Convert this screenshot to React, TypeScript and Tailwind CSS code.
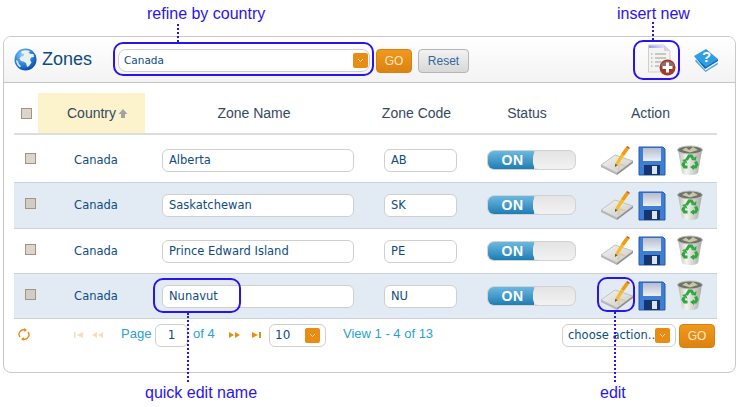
const zones = [
  { name: "Alberta", code: "AB", alt: false, h: "h-[48px] pt-[4px]" },
  { name: "Saskatchewan", code: "SK", alt: true, h: "h-[46px]" },
  { name: "Prince Edward Island", code: "PE", alt: false, h: "h-[45px]" },
  { name: "Nunavut", code: "NU", alt: true, h: "h-[45px]" },
]

function Globe() {
  return (
    <svg width="23" height="23" viewBox="0 0 23 23">
      <defs>
        <radialGradient id="gl" cx="38%" cy="30%" r="75%">
          <stop offset="0" stopColor="#8fd0f7" />
          <stop offset="0.55" stopColor="#2b86dc" />
          <stop offset="1" stopColor="#0b45a5" />
        </radialGradient>
      </defs>
      <circle cx="11.5" cy="11.5" r="11" fill="url(#gl)" />
      <path d="M7 3.5 C10 2 14 2 16 3 L14.5 5 L17 6 L19.5 6 L20 9 L17 9.5 L16 12 L17.5 14.5 L15 18 L13 19 L12 15 L9.5 13.5 L7 13 L5.5 10.5 L7 8.5 L9.5 8 L10 6 L7.5 5.5 Z" fill="#e9f1ea" />
      <path d="M2 12 L4 13 L5 16 L7 18 L6 19.5 C3.5 17.5 2.2 15 2 12 Z" fill="#d3e3e4" />
    </svg>
  )
}

function NewDocIcon() {
  return (
    <svg width="29" height="32" viewBox="0 0 29 32">
      <defs>
        <linearGradient id="dh" x1="0" x2="1" y1="0" y2="0">
          <stop offset="0" stopColor="#9a9af0" />
          <stop offset="1" stopColor="#e8e8fb" />
        </linearGradient>
      </defs>
      <path d="M1.5 1 H17 L23 7 V28 H1.5 Z" fill="#f3f3f1" stroke="#cfcfcf" />
      <path d="M2 1.5 H17 L19 4 H2 Z" fill="url(#dh)" />
      <path d="M17 1 V7 H23 Z" fill="#d5d5d5" />
      <path d="M4 10 H5.5 M8 10 H19 M4 14 H5.5 M8 14 H19 M4 18 H5.5 M8 18 H14 M4 22 H5.5 M8 22 H12" stroke="#9b9b9b" strokeWidth="1.2" />
      <circle cx="20.5" cy="23.5" r="8" fill="#a2392f" />
      <path d="M13.5 22 A7.5 7.5 0 0 1 27.5 22 Z" fill="#8c6f68" />
      <path d="M20.5 18.5 V28.5 M15.5 23.5 H25.5" stroke="#fff" strokeWidth="3" />
    </svg>
  )
}

function HelpBook() {
  return (
    <svg width="26" height="24" viewBox="0 0 26 24">
      <path d="M1 8 L13 1 L25 11 L13 20 Z" fill="#2f9ee4" />
      <path d="M1 8 L12 21 L25 13 V11 L13 19 Z" fill="#0c68b4" />
      <path d="M3 11.5 L12.5 22.5 L25 14.5 L24.5 16.5 L12.5 24 L2 13 Z" fill="#4aa6dc" />
      <text x="9" y="14" fontSize="15" fontWeight="700" fill="#fff" fontFamily="Liberation Sans, sans-serif">?</text>
    </svg>
  )
}

function EditIcon() {
  return (
    <svg width="34" height="30" viewBox="0 0 34 30">
      <defs>
        <linearGradient id="pg" x1="0" x2="1" y1="0" y2="1">
          <stop offset="0" stopColor="#f4f4f3" />
          <stop offset="1" stopColor="#c9c9c7" />
        </linearGradient>
      </defs>
      <path d="M1 19 L15 9 L33 15 L17 27 Z" fill="url(#pg)" stroke="#c2c2c2" />
      <path d="M1 19 L17 27 V29 L1 21 Z" fill="#b5b5b5" />
      <path d="M17 27 L33 15 V17 L17 29 Z" fill="#8f8f8f" />
      <path d="M15 18 L21 8 L24 10 L18 19 Z" fill="#f4bb2a" />
      <path d="M21 8 L26 1 L29 3 L24 10 Z" fill="#ee9c10" />
      <path d="M26 1 L27.5 0 L30 2 L29 3 Z" fill="#c0562c" />
      <path d="M15 18 L18 19 L15 21 Z" fill="#6a5a3a" />
      <path d="M18 24 L20 18 L25 20" fill="none" stroke="#e3c797" strokeWidth="1.4" />
    </svg>
  )
}

function SaveIcon() {
  return (
    <svg width="28" height="30" viewBox="0 0 28 30">
      <defs>
        <linearGradient id="fl" x1="0" x2="0" y1="0" y2="1">
          <stop offset="0" stopColor="#b4bccf" />
          <stop offset="1" stopColor="#eef0f4" />
        </linearGradient>
      </defs>
      <path d="M1 1 H25 L27 3 V29 H1 Z" fill="#3c7fd4" stroke="#2a5ba8" />
      <rect x="5" y="2" width="18" height="13" fill="url(#fl)" />
      <rect x="6" y="19" width="16" height="10" fill="#16356f" />
      <rect x="14" y="20" width="5" height="8" fill="#dbe5f2" />
    </svg>
  )
}

function TrashIcon() {
  return (
    <svg width="28" height="32" viewBox="0 0 28 32">
      <defs>
        <linearGradient id="tb" x1="0" x2="1" y1="0" y2="0">
          <stop offset="0" stopColor="#b7b9b2" />
          <stop offset="0.35" stopColor="#f4f5f1" />
          <stop offset="1" stopColor="#a6a8a2" />
        </linearGradient>
      </defs>
      <path d="M2 5 L6 28 C9 31 19 31 22 28 L26 5 Z" fill="url(#tb)" />
      <ellipse cx="14" cy="5" rx="12.5" ry="4" fill="#6f716c" stroke="#c3c4be" />
      <path d="M6 5 L10 2.5 L13 5 L17 2 L22 5 L14 7.5 Z" fill="#c9c6a2" />
      <g fill="none" stroke="#2fa83f" strokeWidth="3">
        <path d="M10.5 15 L13 11 H15.5 L17 13.5" />
        <path d="M19.5 16.5 L21 19.5 L19.5 22 H16.5" />
        <path d="M11.5 22 H8.5 L7 19.5 L8.5 17" />
      </g>
      <path d="M15 15 L20 15.5 L20.5 11 Z M18 19.5 L14 22 L18 25 Z M6 15 L10 14 L11.5 19 Z" fill="#2fa83f" />
    </svg>
  )
}

function Chevron() {
  return (
    <span className="w-[15px] h-[15px] bg-[#e88c14] rounded-[2px] flex items-center justify-center">
      <svg width="7" height="5" viewBox="0 0 7 5"><path d="M1 1 L3.5 3.5 L6 1" fill="none" stroke="#fbe3bd" strokeWidth="1" /></svg>
    </span>
  )
}

function Toggle() {
  return (
    <div className="w-[89px] h-[20px] -mt-[1px] rounded-[7px] flex overflow-hidden bg-[#dcdcdc] border border-[#d2d2d2]">
      <div className="w-[46px] bg-gradient-to-b from-[#6ab9df] to-[#1b7db4] text-white font-bold text-[14px] leading-[18px] tracking-[0.5px] text-center pl-[4px]">ON</div>
      <div className="flex-1 rounded-[6px] -ml-[1px] bg-gradient-to-b from-[#e4e4e4] to-[#f2f2f2]"></div>
    </div>
  )
}

function Check({ alt }: { alt?: boolean }) {
  return <span className={`block w-[11px] h-[11px] border border-[#a6927e] ${alt ? "bg-[#cfcdc8]" : "bg-[#dcd5ce]"}`}></span>
}

function Note({ className, text }: { className: string; text: string }) {
  return <span className={`absolute text-[16px] leading-[18px] text-[#2a14ee] whitespace-nowrap ${className}`}>{text}</span>
}

function App() {
  return (
    <div className="relative w-[739px] h-[407px] bg-white pt-[36px] pl-[3px] font-['Liberation_Sans',Arial,sans-serif] overflow-hidden">
      <div className="w-[733px] h-[337px] border border-[#c9c9c9] rounded-[8px] overflow-hidden">
        {/* top bar */}
        <div className="h-[46px] flex items-center border-b border-[#c4c4c4] bg-gradient-to-b from-white to-[#f3f3f3] pl-[10px]">
          <Globe />
          <span className="ml-[5px] w-[76px] text-[18px] text-[#0f4c81]">Zones</span>
          <div className="w-[252px] h-[23px] mt-[2px] bg-white border border-[#cfcfcf] rounded-[8px] flex items-center justify-between pl-[5px] pr-[1px] font-['DejaVu_Sans',sans-serif] text-[10.5px] text-[#0f4c81]">
            Canada
            <Chevron />
          </div>
          <button className="ml-[6px] mt-[2px] w-[36px] h-[24px] rounded-[4px] bg-gradient-to-b from-[#f0981e] to-[#dd8210] border border-[#d5820f] text-[#fde9cb] text-[12px]">GO</button>
          <button className="ml-[6px] mt-[2px] w-[51px] h-[24px] rounded-[4px] bg-gradient-to-b from-[#f2f2f2] to-[#d8d8d8] border border-[#b5b5b5] text-[#33689c] text-[12px]">Reset</button>
          <span className="ml-[178px] mt-[1px]"><NewDocIcon /></span>
          <span className="ml-[17px]"><HelpBook /></span>
        </div>

        {/* table */}
        <div className="mt-[10px] ml-[10px] w-[703px] text-[14px] text-[#34495e]">
          <div className="flex h-[40px] border-b-2 border-[#dddddd] items-center box-content">
            <div className="w-[24px] pl-[7px]"><Check /></div>
            <div className="w-[107px] h-full bg-[#fcf3cd] flex items-center gap-[2px] pl-[29px]">
              Country
              <svg width="10" height="11" viewBox="0 0 10 11"><path d="M5 1 L9.5 6 H7 V10 H3 V6 H0.5 Z" fill="#a3a3a3" /></svg>
            </div>
            <div className="w-[218px] text-center">Zone Name</div>
            <div className="w-[107px] text-center">Zone Code</div>
            <div className="w-[114px] text-center">Status</div>
            <div className="w-[133px] text-center">Action</div>
          </div>
          {zones.map((z) => (
            <div key={z.code} className={`flex items-center border-b border-[#ccd2dc] ${z.h} ${z.alt ? "bg-[#e2ebf4]" : "bg-white"}`}>
              <div className="w-[24px] pl-[11px] -mt-[4px]"><Check alt={z.alt} /></div>
              <div className="w-[107px] text-center pl-[9px] mt-[1px] text-[#0f4c81] font-['DejaVu_Sans',sans-serif] text-[11.5px]">Canada</div>
              <div className="w-[218px] flex justify-center pl-[8px]">
                <div className="w-[192px] h-[23px] bg-white border border-[#cfcfcf] rounded-[6px] pl-[6px] text-[11.5px] leading-[21px] text-[#0f4c81] font-['DejaVu_Sans',sans-serif]">{z.name}</div>
              </div>
              <div className="w-[107px] flex justify-center pl-[8px]">
                <div className="w-[73px] h-[23px] bg-white border border-[#cfcfcf] rounded-[6px] pl-[6px] text-[11.5px] leading-[21px] text-[#0f4c81] font-['DejaVu_Sans',sans-serif]">{z.code}</div>
              </div>
              <div className="w-[114px] flex justify-center pl-[8px]"><Toggle /></div>
              <div className="w-[133px] flex items-center gap-[4px] pl-[16px]">
                <EditIcon />
                <SaveIcon />
                <span className="ml-[6px]"><TrashIcon /></span>
              </div>
            </div>
          ))}

          {/* pager */}
          <div className="flex items-center h-[28px] mt-[2px] text-[13px] text-[#2a9fd8]">
            <svg className="ml-[4px] -mt-[1px]" width="12" height="13" viewBox="0 0 12 13"><path d="M2 9 A4.5 4.5 0 0 1 7 2 M10 4 A4.5 4.5 0 0 1 5 11" fill="none" stroke="#e88c14" strokeWidth="1.4" /><path d="M6 0 L9 2 L6.5 4 Z M6 9 L3 11 L5.5 13 Z" fill="#e88c14" /></svg>
            <svg className="ml-[44px]" width="34" height="8" viewBox="0 0 34 8"><path d="M0 1 H1.5 V7 H0 Z M9 1 V7 L3 4 Z M23 1 V7 L18 4 Z M29 1 V7 L24 4 Z" fill="#fbdcb4" /></svg>
            <span className="ml-[13px] -mt-[2px] w-[29px] whitespace-nowrap">Page</span>
            <div className="ml-[5px] w-[33px] h-[23px] border border-[#cfcfcf] rounded-[6px] text-center text-[12px] leading-[21px] text-[#0f4c81] font-['DejaVu_Sans',sans-serif]">1</div>
            <span className="ml-[5px] -mt-[2px] w-[24px] whitespace-nowrap">of 4</span>
            <svg className="ml-[12px]" width="33" height="8" viewBox="0 0 33 8"><path d="M0 1 L5 4 L0 7 Z M6 1 L11 4 L6 7 Z M23 1 L29 4 L23 7 Z M30 1 H32 V7 H30 Z" fill="#e88c14" /></svg>
            <div className="ml-[7px] w-[57px] h-[23px] border border-[#cfcfcf] rounded-[6px] flex items-center justify-between pl-[5px] pr-[5px] text-[12px] text-[#0f4c81] font-['DejaVu_Sans',sans-serif]">10<Chevron /></div>
            <span className="ml-[17px] -mt-[2px] w-[219px] whitespace-nowrap">View 1 - 4 of 13</span>
            <div className="w-[114px] h-[23px] mt-[1px] border border-[#cfcfcf] rounded-[6px] bg-white flex items-center justify-between pl-[5px] pr-[5px] text-[11.5px] text-[#0f4c81] font-['DejaVu_Sans',sans-serif] whitespace-nowrap">choose action..<Chevron /></div>
            <button className="ml-[3px] mt-[1px] w-[36px] h-[24px] rounded-[4px] bg-gradient-to-b from-[#f0981e] to-[#dd8210] border border-[#d5820f] text-[#fde9cb] text-[12px]">GO</button>
          </div>
        </div>
      </div>

      {/* annotations over the screenshot */}
      <Note className="left-[147px] top-[5px]" text="refine by country" />
      <Note className="left-[617px] top-[5px]" text="insert new" />
      <Note className="left-[145px] top-[384px]" text="quick edit name" />
      <Note className="left-[600px] top-[384px]" text="edit" />
      <span className="absolute left-[177px] top-[24px] h-[18px] border-l-2 border-dotted border-[#2a14ee]"></span>
      <span className="absolute left-[652px] top-[22px] h-[18px] border-l-2 border-dotted border-[#2a14ee]"></span>
      <span className="absolute left-[187px] top-[313px] h-[69px] border-l-2 border-dotted border-[#2a14ee]"></span>
      <span className="absolute left-[614px] top-[312px] h-[70px] border-l-2 border-dotted border-[#2a14ee]"></span>
      <span className="absolute left-[113px] top-[42px] w-[261px] h-[34px] border-2 border-[#2a14ee] rounded-[10px]"></span>
      <span className="absolute left-[633px] top-[40px] w-[47px] h-[40px] border-2 border-[#2a14ee] rounded-[10px]"></span>
      <span className="absolute left-[153px] top-[278px] w-[88px] h-[35px] border-2 border-[#2a14ee] rounded-[10px]"></span>
      <span className="absolute left-[597px] top-[277px] w-[38px] h-[35px] border-2 border-[#2a14ee] rounded-[10px]"></span>
    </div>
  )
}

export default App
